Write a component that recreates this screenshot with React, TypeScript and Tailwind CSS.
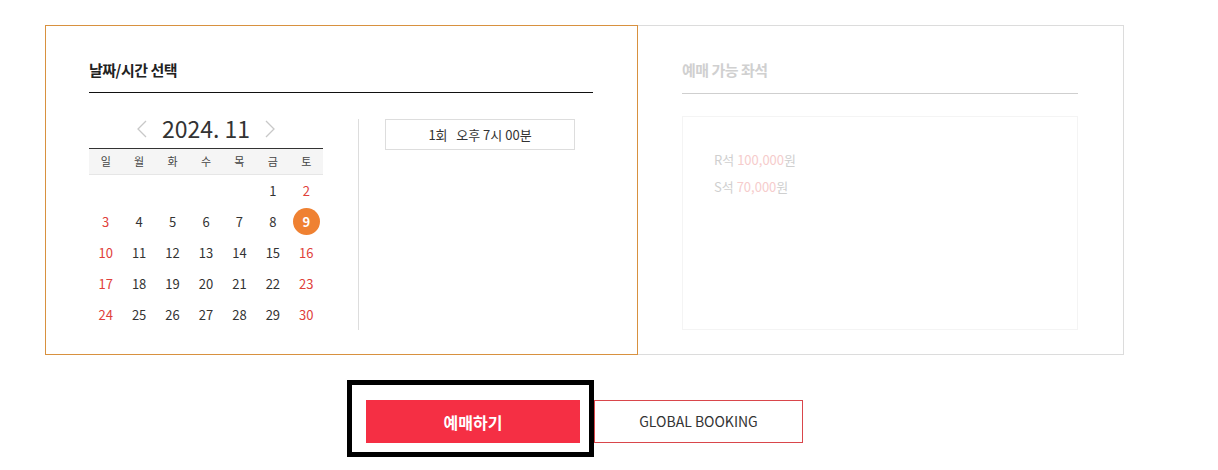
import React, { useState } from 'react';

const FONT = { fontFamily: '"Noto Sans CJK KR", "Noto Sans", sans-serif' };

const weekDays = ['일', '월', '화', '수', '목', '금', '토'];

// November 2024 starts on Friday
const weeks: (number | null)[][] = [
  [null, null, null, null, null, 1, 2],
  [3, 4, 5, 6, 7, 8, 9],
  [10, 11, 12, 13, 14, 15, 16],
  [17, 18, 19, 20, 21, 22, 23],
  [24, 25, 26, 27, 28, 29, 30],
];

const Chevron = ({ dir }: { dir: 'left' | 'right' }) => (
  <svg width="10" height="18" viewBox="0 0 10 18" fill="none" stroke="#c8c8c8" strokeWidth="1.3">
    {dir === 'left' ? <path d="M9 1 L1 9 L9 17" /> : <path d="M1 1 L9 9 L1 17" />}
  </svg>
);

const Calendar: React.FC = () => {
  const [selected, setSelected] = useState(9);

  return (
    <div className="w-[234px] shrink-0">
      <div className="h-[35px] flex items-start justify-center gap-[15px]">
        <button className="h-[30px] flex items-center pt-[2px]"><Chevron dir="left" /></button>
        <span className="text-[23px] leading-[30px] text-[#333]">2024. 11</span>
        <button className="h-[30px] flex items-center pt-[2px]"><Chevron dir="right" /></button>
      </div>
      <div className="grid grid-cols-7 h-[27px] items-center bg-[#f5f5f5] border-t border-[#333] border-b border-b-[#e6e6e6]">
        {weekDays.map(d => (
          <span key={d} className="text-center text-[11px] text-[#444]">{d}</span>
        ))}
      </div>
      {weeks.map((week, wi) => (
        <div key={wi} className="grid grid-cols-7 h-[31px] items-center">
          {week.map((day, di) => {
            if (day === null) return <span key={di} />;
            const isWeekend = di === 0 || di === 6;
            const isSelected = day === selected;
            return (
              <div key={di} className="flex justify-center">
                {isSelected ? (
                  <span className="w-[27px] h-[27px] rounded-full bg-[#ef8132] text-white font-bold text-[13px] flex items-center justify-center">
                    {day}
                  </span>
                ) : (
                  <button
                    onClick={() => setSelected(day)}
                    className={`text-[13px] ${isWeekend ? 'text-[#e0403a]' : 'text-[#333]'}`}
                  >
                    {day}
                  </button>
                )}
              </div>
            );
          })}
        </div>
      ))}
    </div>
  );
};

export default function App() {
  return (
    <div className="bg-white w-[1218px] h-[470px] pl-[45px] pt-[25px]" style={FONT}>
      <div className="w-[1079px]">
        <div className="flex">
          {/* date / time panel */}
          <div className="w-[593px] h-[330px] border border-[#d8913f] pl-[43px] pr-[44px] pt-[33px]">
            <h2 className="text-[15px] leading-[22px] font-bold text-[#222] pb-[11px] border-b border-[#111] tracking-[-0.5px]">
              날짜/시간 선택
            </h2>
            <div className="flex mt-[20px]">
              <Calendar />
              <div className="w-px h-[211px] bg-[#ddd] ml-[35px] mt-[6px]" />
              <div className="ml-[26px] mt-[6px]">
                <button className="w-[190px] h-[31px] border border-[#ddd] text-[13px] text-[#333] flex items-center justify-center">
                  1회&nbsp;&nbsp;&nbsp;오후 7시 00분
                </button>
              </div>
            </div>
          </div>

          {/* seats panel */}
          <div className="flex-1 h-[330px] border border-l-0 border-[#dcdcdc] pl-[44px] pr-[45px] pt-[33px]">
            <h2 className="text-[15px] leading-[22px] font-bold text-[#d0d0d0] pb-[12px] border-b border-[#cfcfcf] tracking-[-0.5px]">
              예매 가능 좌석
            </h2>
            <div className="mt-[22px] h-[214px] border border-[#f4f4f4] pl-[31px] pt-[29px]">
              <p className="text-[13px] leading-[27px] text-[#cfcfcf]">
                R석 <span className="text-[#f6cccc]">100,000</span>원
              </p>
              <p className="text-[13px] leading-[27px] text-[#cfcfcf]">
                S석 <span className="text-[#f6cccc]">70,000</span>원
              </p>
            </div>
          </div>
        </div>

        {/* action buttons */}
        <div className="flex justify-center gap-[14px] mt-[45px]">
          <div className="relative">
            <button className="w-[214px] h-[43px] bg-[#f52f44] text-white text-[16px] font-bold">
              예매하기
            </button>
            <div className="absolute left-[-19px] top-[-20px] w-[247px] h-[77px] border-[5px] border-black pointer-events-none" />
          </div>
          <button className="w-[209px] h-[43px] border border-[#d9464b] text-[14px] text-[#333]">
            GLOBAL BOOKING
          </button>
        </div>
      </div>
    </div>
  );
}
